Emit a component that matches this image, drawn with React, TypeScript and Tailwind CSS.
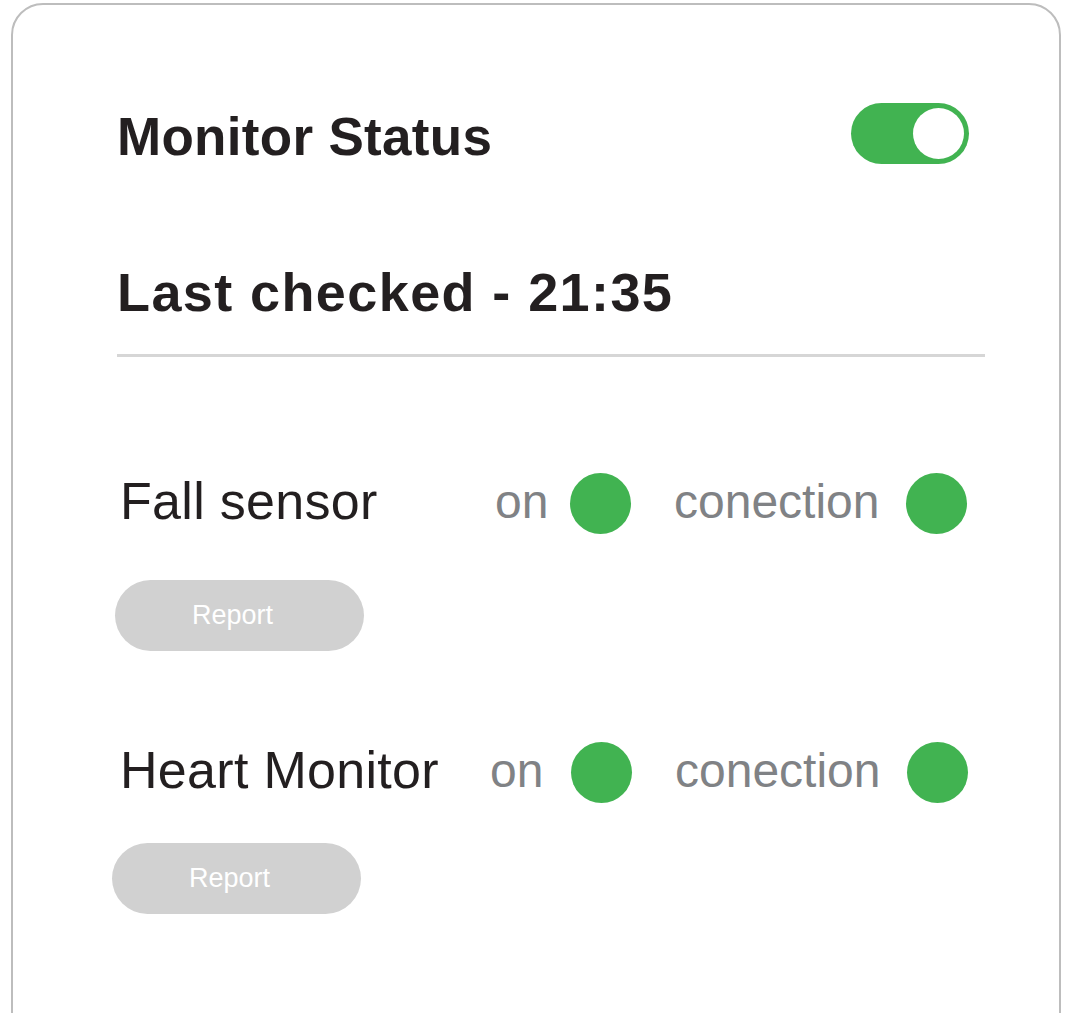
import type { ReactNode } from "react";

const font = { fontFamily: '"Liberation Sans", Arial, sans-serif' };

function Dot() {
  return <span className="block w-[61px] h-[61px] rounded-full bg-[#41b351] shrink-0" />;
}

function Toggle() {
  return (
    <div className="w-[118px] h-[61px] rounded-full bg-[#41b351] flex items-center justify-end pr-[5px]">
      <span className="block w-[51px] h-[51px] rounded-full bg-white" />
    </div>
  );
}

interface SensorProps {
  label: ReactNode;
  labelW: string;
  onW: string;
  reportGap: string;
  reportShift: string;
}

function Sensor({ label, labelW, onW, reportGap, reportShift }: SensorProps) {
  return (
    <div>
      <div className="flex items-center h-[61px]">
        <span className={`${labelW} shrink-0 pl-[3px] text-[52px] leading-none pb-[6px] text-[#231f20] whitespace-nowrap tracking-[0.3px]`}>
          {label}
        </span>
        <span className={`${onW} shrink-0 text-[48px] leading-none pb-[3px] text-[#808285]`}>on</span>
        <Dot />
        <span className="ml-[43px] w-[232px] shrink-0 text-[48px] leading-none pb-[3px] text-[#808285]">
          conection
        </span>
        <Dot />
      </div>
      <button
        type="button"
        className={`${reportGap} ${reportShift} w-[249px] h-[71px] rounded-full bg-[#d1d1d1] text-white text-[27px] leading-none pr-[14px] flex items-center justify-center`}
      >
        Report
      </button>
    </div>
  );
}

export default function App() {
  return (
    <div className="h-[1013px] overflow-hidden bg-white pt-[3px] pl-[11px] pr-[6px]" style={font}>
      <section className="h-[1060px] border-2 border-[#bdbdbd] rounded-[32px] pt-[98px] pl-[104px] pr-[74px]">
        <div className="flex items-start justify-between pr-[16px]">
          <h1 className="mt-[7px] text-[53px] leading-none font-bold text-[#231f20] tracking-[0.3px]">
            Monitor Status
          </h1>
          <Toggle />
        </div>
        <h2 className="mt-[101px] text-[54px] leading-none font-bold text-[#231f20] tracking-[1.4px] whitespace-nowrap">
          Last checked - 21:35
        </h2>
        <div className="mt-[35px] h-[3px] bg-[#d6d6d6]" />
        <div className="mt-[116px]">
          <Sensor label="Fall sensor" labelW="w-[378px]" onW="w-[75px]" reportGap="mt-[46px]" reportShift="-ml-[2px]" />
        </div>
        <div className="mt-[91px]">
          <Sensor label="Heart Monitor" labelW="w-[373px]" onW="w-[81px]" reportGap="mt-[40px]" reportShift="-ml-[5px]" />
        </div>
      </section>
    </div>
  );
}
